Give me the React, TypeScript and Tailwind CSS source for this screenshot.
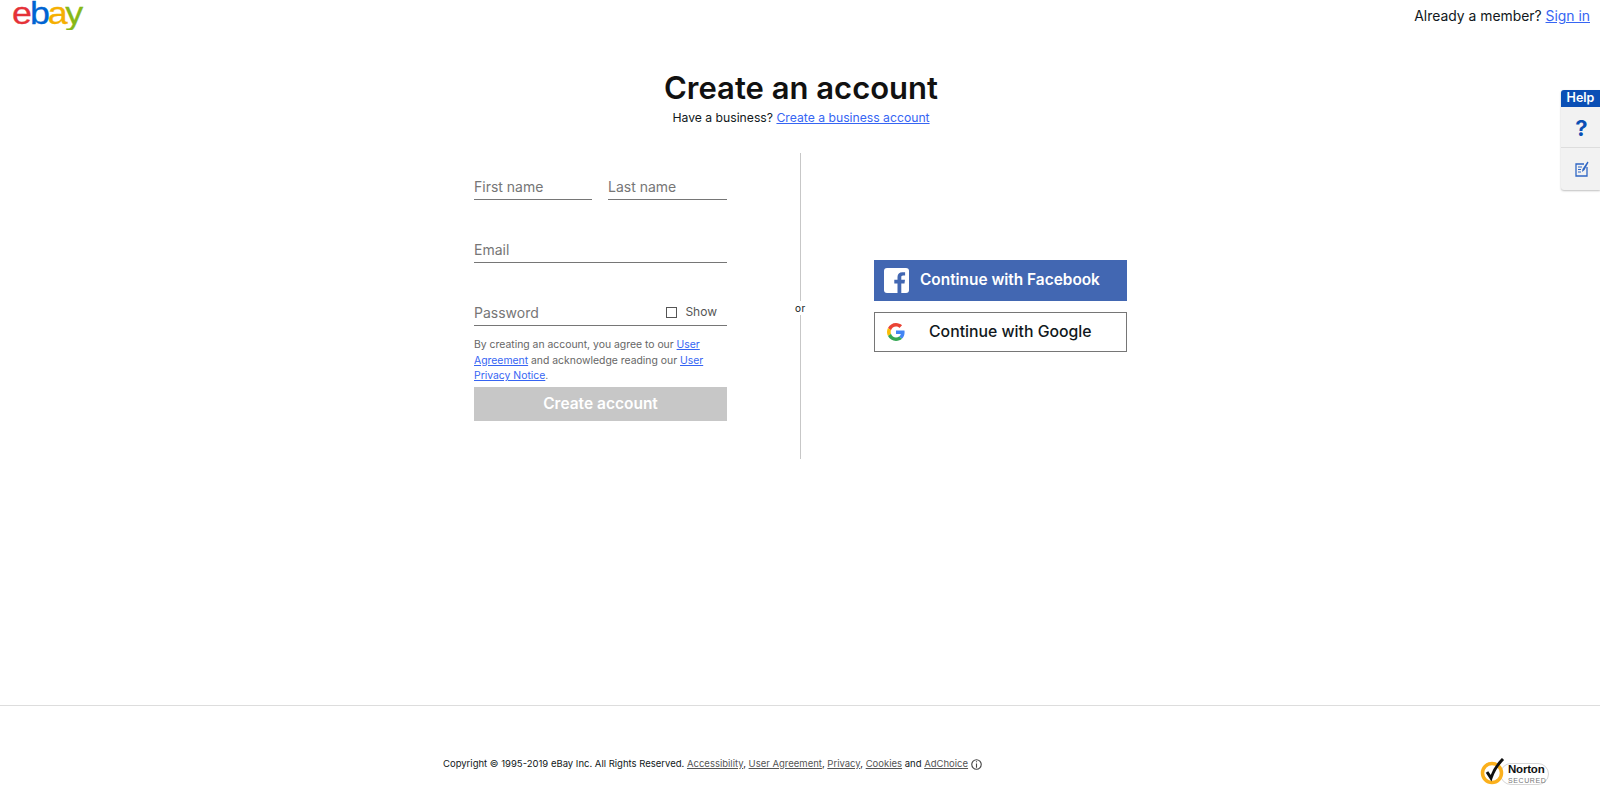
import React from "react";

const FONT = "font-['Inter','Liberation_Sans',sans-serif]";
const LINK = "text-[#3665f3] underline";

function Field({ label, className = "", children }: { label: string; className?: string; children?: React.ReactNode }) {
  return (
    <div className={`flex h-[27px] items-center justify-between border-b border-[#767676] text-[14px] text-[#767676] ${className}`}>
      <span>{label}</span>
      {children}
    </div>
  );
}

function Logo() {
  return (
    <svg width="72" height="30" viewBox="0 0 72 30" className="shrink-0">
      <g transform="scale(1.12 1)" fontFamily="'Liberation Sans', sans-serif" fontSize="32" strokeWidth="0.3">
        <text x="0" y="24" fill="#e53238" stroke="#e53238">e</text>
        <text x="16" y="24" fill="#0064d2" stroke="#0064d2">b</text>
        <text x="32" y="24" fill="#f5af02" stroke="#f5af02">a</text>
        <text x="47.500" y="24" fill="#86b817" stroke="#86b817">y</text>
      </g>
    </svg>
  );
}

function FacebookIcon() {
  return (
    <svg width="25" height="25" viewBox="0 0 25 25" className="shrink-0">
      <rect width="25" height="25" rx="3" fill="#ffffff" />
      <path d="M17.3 25v-9.6h3.2l.5-3.7h-3.7V9.4c0-1.1.3-1.8 1.8-1.8h2V4.3c-.4 0-1.5-.1-2.8-.1-2.8 0-4.8 1.7-4.8 4.9v2.6h-3.2v3.7h3.2V25z" fill="#4267b2" />
    </svg>
  );
}

function GoogleIcon() {
  return (
    <svg width="18" height="18" viewBox="0 0 48 48" className="shrink-0">
      <path fill="#EA4335" d="M24 9.5c3.5 0 6.7 1.2 9.2 3.6l6.9-6.9C35.9 2.4 30.5 0 24 0 14.6 0 6.5 5.4 2.6 13.2l8 6.2C12.5 13.7 17.8 9.5 24 9.5z" />
      <path fill="#4285F4" d="M46.9 24.5c0-1.6-.1-3.100-.4-4.500H24v9h12.900c-.6 3-2.200 5.500-4.800 7.200l7.700 6c4.500-4.200 7.100-10.300 7.100-17.700z" />
      <path fill="#FBBC05" d="M10.500 28.600c-.5-1.400-.8-3-.8-4.600s.3-3.200.8-4.600l-8-6.200C.9 16.500 0 20.100 0 24s.9 7.500 2.600 10.800z" />
      <path fill="#34A853" d="M24 48c6.500 0 11.900-2.100 15.900-5.800l-7.700-6c-2.200 1.400-4.900 2.300-8.200 2.300-6.200 0-11.500-4.200-13.400-9.900l-8 6.200C6.500 42.600 14.600 48 24 48z" />
    </svg>
  );
}

function Norton() {
  return (
    <div className="relative h-[27px] w-[69px]">
      <div className="absolute left-[20px] top-[2px] h-[22px] w-[49px] rounded-full border border-[#d6d6d6]" />
      <svg width="30" height="28" viewBox="0 0 30 28" className="absolute -top-[3px] left-0">
        <circle cx="12" cy="15" r="9.500" fill="#ffffff" stroke="#fbb01c" strokeWidth="3.500" />
        <path d="M7 14l4 6C13 14 17 7 23 1" fill="none" stroke="#111111" strokeWidth="3" />
      </svg>
      <div className="absolute left-[28px] top-[3px] flex flex-col font-['Liberation_Sans',sans-serif] leading-none">
        <span className="text-[11.500px] font-bold tracking-[-0.2px] text-[#111111]">Norton</span>
        <span className="mt-[1px] text-[7px] tracking-[0.6px] text-[#777777]">SECURED</span>
      </div>
    </div>
  );
}

export default function App() {
  return (
    <div className={`relative flex h-[788px] w-[1600px] flex-col overflow-hidden bg-white text-[#111820] ${FONT}`}>
      <header className="flex h-[32px] items-start justify-between pl-[12px] pr-[10px]">
        <Logo />
        <div className="pt-[7px] text-[13.900px] leading-[18px]">
          Already a member? <a className={LINK}>Sign in</a>
        </div>
      </header>

      <main className="flex flex-1 flex-col items-center pl-[2px]">
        <h1 className="mt-[36px] text-[31px] font-semibold leading-[40px] text-[#111111]">Create an account</h1>
        <p className="mt-[2px] text-[12.200px] leading-[16px]">
          Have a business? <a className={LINK}>Create a business account</a>
        </p>

        <div className="mt-[27px] flex h-[306px] w-full justify-center">
          <section className="flex w-[326px] justify-start">
            <form className="w-[253px]">
              <div className="mt-[20px] flex gap-[16px]">
                <Field label="First name" className="w-[118px]" />
                <Field label="Last name" className="w-[119px]" />
              </div>
              <Field label="Email" className="mt-[36px]" />
              <Field label="Password" className="mt-[36px]">
                <span className="mr-[10px] flex items-center gap-[8px] text-[12px] text-[#555555]">
                  <span className="h-[11px] w-[11px] border border-[#555555]" />
                  Show
                </span>
              </Field>
              <p className="mt-[11px] text-[10.400px] leading-[15.500px] text-[#666666]">
                By creating an account, you agree to our <a className={LINK}>User</a> <a className={LINK}>Agreement</a> and acknowledge reading our{" "}
                <a className={LINK}>User</a> <a className={LINK}>Privacy Notice</a>.
              </p>
              <button type="button" className="mt-[3px] h-[34px] w-full bg-[#c7c7c7] text-[15.500px] font-semibold text-white">
                Create account
              </button>
            </form>
          </section>

          <div className="relative w-px bg-[#c7c7c7]">
            <span className="absolute left-1/2 top-[148px] -translate-x-1/2 bg-white px-[1px] text-[10px] leading-[14px] tracking-[0.5px]">or</span>
          </div>

          <section className="flex w-[327px] flex-col gap-[11px] pl-[73px] pt-[107px]">
            <button type="button" className="flex h-[41px] w-[253px] items-center gap-[11px] bg-[#4267b2] pl-[10px] text-[15.400px] font-semibold text-white">
              <FacebookIcon />
              <span className="-mt-[2px]">Continue with Facebook</span>
            </button>
            <button type="button" className="flex h-[40px] w-[253px] items-center gap-[24px] border border-[#767676] pl-[12px] text-[15.800px] font-medium text-[#111820]">
              <GoogleIcon />
              Continue with Google
            </button>
          </section>
        </div>
      </main>

      <footer className="flex h-[83px] items-start justify-between border-t border-[#dddddd] pl-[443px] pr-[51px]">
        <div className="mt-[51px] flex items-center gap-[3px] text-[9.500px] leading-[14px]">
          <span>
            Copyright © 1995-2019 eBay Inc. All Rights Reserved.{" "}
            <a className="text-[#555555] underline">Accessibility</a>, <a className="text-[#555555] underline">User Agreement</a>,{" "}
            <a className="text-[#555555] underline">Privacy</a>, <a className="text-[#555555] underline">Cookies</a> and{" "}
            <a className="text-[#555555] underline">AdChoice</a>
          </span>
          <svg width="11" height="11" viewBox="0 0 10 10" fill="none" stroke="#444444">
            <circle cx="5" cy="5" r="4.300" />
            <path d="M5 4v4M5 2v1" />
          </svg>
        </div>
        <div className="mt-[55px]">
          <Norton />
        </div>
      </footer>

      <aside className="absolute right-0 top-[90px] w-[39px] overflow-hidden rounded-bl-[3px] rounded-tl-[3px] bg-[#f2f2f2] shadow-[0_1px_2px_rgba(0,0,0,0.25)]">
        <div className="h-[17px] bg-[#0a4fb5] text-center text-[12.500px] font-semibold leading-[16px] text-white">Help</div>
        <div className="flex h-[41px] items-center justify-center border-b border-[#dddddd] pl-[2px] pt-[3px] text-[22px] font-bold text-[#0a4fb5]">?</div>
        <div className="flex h-[42px] items-center justify-center pl-[2px]">
          <svg width="14" height="16" viewBox="0 0 14 16" fill="none" stroke="#2f66c4" strokeWidth="1.300">
            <path d="M9 3H1v12h11V6" />
            <path d="M3 6h4M3 8.500h3M3 11h3" strokeWidth="1" />
            <path d="M12.500 .5L7.500 8l-.5 3 2.500-2L13.500 1.500z" fill="#2f66c4" stroke="none" />
          </svg>
        </div>
      </aside>
    </div>
  );
}
